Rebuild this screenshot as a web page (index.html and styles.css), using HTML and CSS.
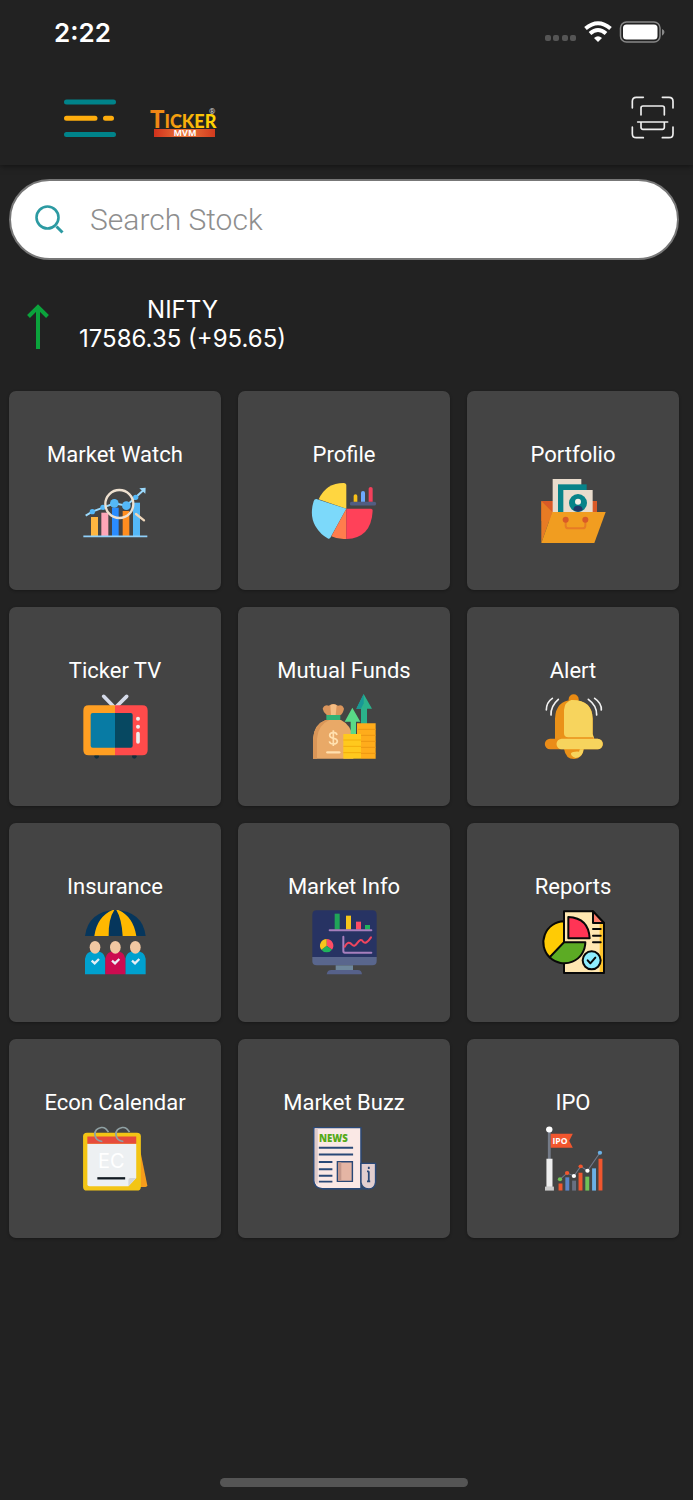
FILE: index.html
```
<!DOCTYPE html>
<html lang="en">
<head>
<meta charset="UTF-8">
<meta name="viewport" content="width=device-width, initial-scale=1.0">
<title>Ticker MVM</title>
<link rel="stylesheet" href="styles.css">
</head>
<body>
<header class="header">
    <div class="status-bar">
        <span class="time">2:22</span>
        <svg class="status-icons" viewBox="0 0 120 24" aria-hidden="true">
            <g fill="#555">
                <rect x="0" y="15" width="6" height="6" rx="2"/>
                <rect x="8" y="15" width="6" height="6" rx="2"/>
                <rect x="17" y="15" width="6" height="6" rx="2"/>
                <rect x="25" y="15" width="6" height="6" rx="2"/>
            </g>
            <g fill="none" stroke="#fff" stroke-width="4">
                <path d="M40.500 8.500Q53 -2 65.500 8.500"/>
                <path d="M45 13.500Q53 6.500 61 13.500"/>
            </g>
            <path d="M49 18Q53 14.500 57 18L53 22Z" fill="#fff"/>
            <rect x="75.500" y="2" width="39.500" height="20" rx="6" fill="none" stroke="#888" stroke-width="1.500"/>
            <rect x="78" y="4.500" width="34.500" height="15" rx="3.500" fill="#fff"/>
            <path d="M117 9Q119.500 10 119.500 12T117 15.700Z" fill="#888"/>
        </svg>
    </div>
    <div class="app-bar">
        <button class="icon-button" type="button" aria-label="Menu">
            <svg class="menu-icon" viewBox="0 0 52 38" fill="none" stroke-width="5" stroke-linecap="round">
                <path d="M2.500 3h47M2.500 35.500h47" stroke="#00838a"/>
                <path d="M2.500 19.200h28.500M41.500 19.200h6" stroke="#ffad0d"/>
            </svg>
        </button>
        <a class="logo" href="#">
            <svg viewBox="0 0 68 34">
                <defs>
                    <linearGradient id="gold" x1="0" x2="1">
                        <stop offset="0" stop-color="#ef7d17"/>
                        <stop offset="1" stop-color="#ffd800"/>
                    </linearGradient>
                    <linearGradient id="bar" x1="0" x2="1">
                        <stop offset="0" stop-color="#d0311c"/>
                        <stop offset=".5" stop-color="#ec7a3c"/>
                        <stop offset="1" stop-color="#d23a1e"/>
                    </linearGradient>
                </defs>
                <rect x="6" y="22" width="61" height="8" fill="url(#bar)"/>
                <text class="logo-name" x="2" y="21" fill="url(#gold)"><tspan class="logo-initial">T</tspan>ICKER</text>
                <text class="logo-sub" x="37" y="29" text-anchor="middle">MVM</text>
                <text class="logo-mark" x="61" y="7">®</text>
            </svg>
        </a>
        <button class="icon-button scan" type="button" aria-label="Scan code">
            <svg class="scan-icon" viewBox="333 290 132 132" fill="none" stroke="#eee" stroke-width="5" stroke-linecap="round">
                <path d="M337 326V306Q337 294 349 294H370M427 294H447Q459 294 459 306V326M459 383V403Q459 415 447 415H427M370 415H349Q337 415 337 403V383"/>
                <path d="M363 347V326Q363 320 369 320H427Q433 320 433 326V347M353 368H443M363 370V384Q363 390 369 390H427Q433 390 433 384V370"/>
            </svg>
        </button>
    </div>
</header>

<main class="main">
    <form class="search">
        <label for="stock" aria-label="Search stock">
            <svg class="search-icon" viewBox="0 0 30 30" fill="none" stroke="#2c9aa2">
                <circle cx="12.500" cy="12.500" r="11" stroke-width="2.600"/>
                <path d="M21.500 21.500l6 6" stroke-width="3"/>
            </svg>
        </label>
        <input type="search" id="stock" name="stock" placeholder="Search Stock">
    </form>

    <div class="index">
        <svg class="arrow" viewBox="0 0 22 46" fill="none" stroke="#0ba33c" stroke-width="4">
            <path d="M11 45V3M1.500 12.500L11 3L20.500 12.500"/>
        </svg>
        <div class="quote">
            <div>NIFTY</div>
            <div>17586.35 (+95.65)</div>
        </div>
    </div>

    <nav class="grid">
        <a class="card" href="#">
            <span>Market Watch</span>
            <svg viewBox="51 144 198 198">
                <path d="M78 261h21v57H78z" fill="#ffb640"/>
                <path d="M109 248h21v70h-21z" fill="#ffa6b8"/>
                <path d="M141 233h20v85h-20z" fill="#2a8cff"/>
                <path d="M173 243h20v75h-20z" fill="#ff8d1f"/>
                <path d="M204 218h21v100h-21z" fill="#54b8f8"/>
                <path d="M55 319h192" stroke="#8fd0fa" stroke-width="5"/>
                <path d="M62 257L82 245L114 233L148 220L184 227L212 202L236 180" fill="none" stroke="#9ad8fb" stroke-width="6"/>
                <path d="M223 175l19-2-1 18z" fill="#9ad8fb"/>
                <g fill="#54b8f8">
                    <circle cx="82" cy="245" r="8"/>
                    <circle cx="114" cy="232" r="8"/>
                    <circle cx="148" cy="220" r="13"/>
                    <circle cx="184" cy="227" r="13"/>
                    <circle cx="212" cy="202" r="8"/>
                </g>
                <circle cx="163" cy="222" r="42" fill="none" stroke="#eee0cf" stroke-width="7"/>
                <path d="M213 252L237 271" stroke="#eed6ba" stroke-width="7" stroke-linecap="round"/>
            </svg>
        </a>
        <a class="card" href="#">
            <span>Profile</span>
            <svg viewBox="51 144 198 198">
                <path d="M157 236L74 208Q96 159 149 159Q157 159 157 167Z" fill="#ffd640"/>
                <path d="M157 236L67 207Q61 207 59 214Q46 256 64 288Q80 315 103 326Q108 327 110 322Z" fill="#7cd9fa"/>
                <path d="M157 236L112 319Q132 329 157 327Z" fill="#ff7d4d"/>
                <path d="M157 236H230Q236 236 236 242Q232 324 157 327Z" fill="#ff4159"/>
                <path d="M173 221h68" stroke="#525d82" stroke-width="11" stroke-linecap="round"/>
                <path d="M179 215V198q0-5 5.500-5t5.500 5V215z" fill="#f8c018"/>
                <path d="M201 215V188q0-5 6-5t6 5V215z" fill="#6da9fc"/>
                <path d="M224 215V176q0-5 6-5t6 5V215z" fill="#f3405b"/>
            </svg>
        </a>
        <a class="card" href="#">
            <span>Portfolio</span>
            <svg viewBox="51 144 198 198">
                <path d="M55 213h167v60H55z" fill="#d95a27"/>
                <path d="M89 147h86v110H89z" fill="#e9dccd"/>
                <path d="M105 163h86v90h-86z" fill="#078389"/>
                <path d="M121 180h88v80h-88z" fill="#e9dccd"/>
                <circle cx="165" cy="219" r="27" fill="#078389"/>
                <circle cx="165" cy="215" r="9" fill="#f4eee5"/>
                <path d="M151 240q0-13 14-13t14 13q-14 11-28 0" fill="#213768"/>
                <path d="M55 213V339L88 246Z" fill="#e77b24"/>
                <path d="M88 246H248L214 339H55Z" fill="#f19d20"/>
                <path d="M128 272V287Q128 295 136 295H179Q187 295 187 287V272" fill="none" stroke="#e77b24" stroke-width="6"/>
                <circle cx="128" cy="269" r="9" fill="#d95a27"/>
                <circle cx="187" cy="269" r="9" fill="#d95a27"/>
            </svg>
        </a>
        <a class="card" href="#">
            <span>Ticker TV</span>
            <svg viewBox="51 42 198 198">
                <path d="M116 49L150 84L185 49" fill="none" stroke="#d5dae9" stroke-width="11" stroke-linecap="round"/>
                <circle cx="95" cy="229" r="7" fill="#122e3b"/>
                <circle cx="208" cy="229" r="7" fill="#122e3b"/>
                <path d="M150 76H71Q55 76 55 92V210Q55 226 71 226H150Z" fill="#ff9f22"/>
                <path d="M150 76H232Q248 76 248 92V210Q248 226 232 226H150Z" fill="#ff4b4b"/>
                <path d="M150 99H83Q77 99 77 105V197Q77 203 83 203H150Z" fill="#087ba4"/>
                <path d="M150 99H197Q203 99 203 105V197Q203 203 197 203H150Z" fill="#074861"/>
                <circle cx="219" cy="116" r="6" fill="#eee"/>
                <circle cx="219" cy="140" r="6" fill="#eee"/>
                <path d="M219 161v25" stroke="#eee" stroke-width="11" stroke-linecap="round"/>
            </svg>
        </a>
        <a class="card" href="#">
            <span>Mutual Funds</span>
            <svg viewBox="51 42 198 198">
                <path d="M57 236V176Q60 133 95 120H141Q172 135 178 176V236Z" fill="#e9a967"/>
                <path d="M57 236V176Q60 133 95 120H106Q72 135 69 176V236Z" fill="#d99658"/>
                <path d="M86 86Q92 73 104 77Q118 67 132 77Q145 72 150 86Q147 101 138 106H99Q88 98 86 86Z" fill="#db955c"/>
                <path d="M109 76Q118 69 128 76L125 105H111Z" fill="#f5bd84"/>
                <path d="M97 105h42v15H97z" fill="#31b276"/>
                <path d="M100 217h36" stroke="#ffe0af" stroke-width="7" stroke-linecap="round"/>
                <path d="M129 165Q127 157 118 157Q107 158 107 166Q107 173 118 175Q130 177 130 184Q129 192 118 192Q108 192 106 184M118 151V198" fill="none" stroke="#ffe0af" stroke-width="5"/>
                <path d="M175 83L199 125H186V165H170V125H152Z" fill="#59d987"/>
                <path d="M209 42L234 86H219V134H201V86H187Z" fill="#2bb28b"/>
                <path d="M209 42L187 86H201L209 70Z" fill="#189796"/>
                <path d="M148 162h53v74h-53z" fill="#ffc91d"/>
                <path d="M189 130h56v106h-44v-74h-12z" fill="#ffac1b"/>
                <path d="M148 180h53M148 199h53M148 218h53" stroke="#f2ad0d" stroke-width="3"/>
                <path d="M192 148h53M201 166h44M201 184h44M201 202h44M201 220h44" stroke="#ed9713" stroke-width="3"/>
            </svg>
        </a>
        <a class="card" href="#">
            <span>Alert</span>
            <svg viewBox="51 42 198 198">
                <circle cx="152" cy="58" r="15" fill="#e98a12"/>
                <path d="M96 184V116Q98 61 150 60Q208 62 209 116V162L216 184Z" fill="#ea9118"/>
                <path d="M123 160V90Q125 66 145 60Q207 58 209 116V162L216 184L210 172H136Q123 172 123 160Z" fill="#f7d45d"/>
                <path d="M123 206H182Q179 236 153 237Q128 237 123 206Z" fill="#ea9118"/>
                <path d="M182 206Q181 230 158 234Q142 228 144 220Q148 214 168 215L171 206Z" fill="#f7d45d"/>
                <path d="M81 192h143" stroke="#ea8c18" stroke-width="31" stroke-linecap="round"/>
                <path d="M116 192h108" stroke="#f7d45d" stroke-width="31" stroke-linecap="round"/>
                <path d="M88 55Q70 67 70 90M106 58Q83 78 84 105M196 58Q222 77 221 105M215 55Q236 69 235 90" fill="none" stroke="#f1f1f1" stroke-width="5" stroke-linecap="round"/>
            </svg>
        </a>
        <a class="card" href="#">
            <span>Insurance</span>
            <svg viewBox="51 30 198 198">
                <path d="M60 108Q70 34 151 30Q233 34 242 108Z" fill="#06365c"/>
                <path d="M88 108Q96 50 143 30H148Q130 56 131 108ZM154 30H160Q205 50 214 108H173Q170 56 154 30Z" fill="#ffb800"/>
                <path d="M60 223V176Q62 154 90 153Q118 154 121 176V223ZM181 223V176Q184 154 211 153Q240 154 242 176V223Z" fill="#00a1cf"/>
                <path d="M121 223V176Q124 154 151 153Q178 154 181 176V223Z" fill="#cc0b50"/>
                <g fill="#f2c8a2">
                    <ellipse cx="90" cy="142" rx="16" ry="19"/>
                    <ellipse cx="151" cy="142" rx="16" ry="19"/>
                    <ellipse cx="211" cy="142" rx="16" ry="19"/>
                </g>
                <path d="M80 182l9 8 13-13M141 182l9 8 13-13M201 182l9 8 13-13" fill="none" stroke="#e8eef5" stroke-width="7"/>
            </svg>
        </a>
        <a class="card" href="#">
            <span>Market Info</span>
            <svg viewBox="738 30 198 198">
                <path d="M742 171V44Q742 31 755 31H922Q935 31 935 44V171Z" fill="#273363"/>
                <path d="M742 171H935V183Q935 196 922 196H755Q742 196 742 183Z" fill="#59668d"/>
                <path d="M812 196h52v15h-52z" fill="#6e879c"/>
                <path d="M785 223Q787 210 799 210H878Q890 210 891 223Z" fill="#56618a"/>
                <path d="M809 41h15v48h-15z" fill="#20a558"/>
                <path d="M843 47h15v42h-15z" fill="#f6c51b"/>
                <path d="M873 65h15v24h-15z" fill="#ff4d65"/>
                <path d="M900 75h15v14h-15z" fill="#20b35c"/>
                <path d="M794 91h125M835 110V153Q835 158 840 158H919" fill="none" stroke="#a77fbd" stroke-width="6" stroke-linecap="round"/>
                <path d="M839 140Q850 120 861 134Q868 142 876 130Q888 113 894 125Q903 135 918 112" fill="none" stroke="#ef455e" stroke-width="6" stroke-linecap="round"/>
                <path d="M785 137V117A20 20 0 0 1 801 149Z" fill="#ff4d65"/>
                <path d="M785 137L801 149A20 20 0 0 1 769 149Z" fill="#20b35c"/>
                <path d="M785 137L769 149A20 20 0 0 1 785 117Z" fill="#f6c51b"/>
            </svg>
        </a>
        <a class="card" href="#">
            <span>Reports</span>
            <svg viewBox="51 30 198 198" stroke="#080808" stroke-width="6" stroke-linejoin="round" stroke-linecap="round">
                <path d="M123 34H210L243 69V219H123Z" fill="#ffe7b1"/>
                <path d="M230 72h10v144h-10z" fill="#ffc52e" stroke="none"/>
                <path d="M210 34V69H243Z" fill="#ff7d6b"/>
                <path d="M123 64A63 63 0 0 0 80 172L123 127Z" fill="#ffcb05"/>
                <path d="M123 127H187A63 63 0 0 1 80 172Z" fill="#5cab24"/>
                <path d="M136 51V115H200Q197 54 136 51Z" fill="#ff3455"/>
                <path d="M210 87h23M210 107h23M210 127h23" fill="none"/>
                <circle cx="206" cy="181" r="27" fill="#8eeeff"/>
                <path d="M194 181l8 9 15-17" fill="none"/>
            </svg>
        </a>
        <a class="card" href="#">
            <span>Econ Calendar</span>
            <svg viewBox="48 31 185 185">
                <g transform="scale(1 .93)">
                    <path d="M206 80L231 212Q231 217 226 217H190Z" fill="#f59c1c"/>
                    <rect x="51" y="54" width="162" height="174" rx="11" fill="#f3c515"/>
                    <path d="M63 87H200V190L178 215H69Q63 215 63 209Z" fill="#edf0f2"/>
                    <path d="M63 65h137v22H63z" fill="#e64b3c"/>
                    <path d="M178 215V196Q178 190 184 190H200Z" fill="#d2d5d8"/>
                    <path d="M122 52Q114 36 102 38Q84 41 84 59Q86 78 105 80M181 52Q173 36 161 38Q143 41 143 59Q145 78 164 80" fill="none" stroke="#8fa0a3" stroke-width="5"/>
                    <path d="M91 191h78" stroke="#111a22" stroke-width="7"/>
                </g>
                <text class="calendar-text" x="130" y="149" text-anchor="middle">EC</text>
            </svg>
        </a>
        <a class="card" href="#">
            <span>Market Buzz</span>
            <svg viewBox="689 31 185 185">
                <g transform="scale(1 .93)" stroke="#294877" stroke-width="4">
                    <path d="M697 38H829V222H720Q697 218 697 198Z" fill="#fae8e5"/>
                    <path d="M700 40h8V210Q700 206 700 198Z" fill="#dfcac9" stroke="none"/>
                    <path d="M829 146H870V203Q868 223 850 223Q832 221 829 203Z" fill="#e1cecf"/>
                    <path d="M720 223h130" fill="none"/>
                    <path d="M711 99h96M711 119h96M711 142h38M711 164h38M711 183h38M711 201h38" stroke-width="6"/>
                    <path d="M763 141h42v59h-42z" fill="#e4b5a4"/>
                    <path d="M765 143h9v55h-9z" fill="#c5988b" stroke="none"/>
                    <path d="M851 156v7M851 170v30M846 170h5M846 200h9" fill="none" stroke-width="5"/>
                </g>
                <text class="news-text" x="752" y="75" text-anchor="middle">NEWS</text>
            </svg>
        </a>
        <a class="card" href="#">
            <span>IPO</span>
            <svg viewBox="1330 31 185 185">
                <g transform="scale(1 .93)">
                    <path d="M1356 48v86" stroke="#747b88" stroke-width="8"/>
                    <circle cx="1356" cy="44" r="9" fill="#fff"/>
                    <path d="M1348 132h17v85h-17z" fill="#eee"/>
                    <path d="M1344 216h25v12h-25z" fill="#ccc"/>
                    <path d="M1360 57H1422L1412 78L1422 99H1360Z" fill="#f1562e"/>
                    <path d="M1382 207h11v21h-11zM1438 174h11v54h-11zM1494 132h11v96h-11z" fill="#f1562e"/>
                    <path d="M1401 188h11v40h-11z" fill="#5b84c7"/>
                    <path d="M1420 198h11v30h-11z" fill="#697080"/>
                    <path d="M1457 186h11v42h-11z" fill="#70c157"/>
                    <path d="M1476 161h11v67h-11z" fill="#6ab0e5"/>
                    <path d="M1386 194L1406 175L1425 184L1444 155L1463 168L1498 114" fill="none" stroke="#727a8d" stroke-width="3"/>
                    <circle cx="1386" cy="194" r="6" fill="#70c157"/>
                    <circle cx="1406" cy="175" r="6" fill="#f1562e"/>
                    <circle cx="1425" cy="184" r="6" fill="#fff"/>
                    <circle cx="1444" cy="155" r="6" fill="#f1562e"/>
                    <circle cx="1463" cy="168" r="6" fill="#fff"/>
                    <circle cx="1498" cy="114" r="6" fill="#6ab0e5"/>
                </g>
                <text class="flag-text" x="1386" y="81" text-anchor="middle">IPO</text>
            </svg>
        </a>
    </nav>
</main>

<footer class="footer">
    <div class="home-indicator"></div>
</footer>
</body>
</html>
```

FILE: styles.css
```
* {
    box-sizing: border-box;
}
body {
    display: flex;
    flex-direction: column;
    min-height: 100vh;
    margin: 0;
    background-color: #222;
    color: #fff;
    font-family: Roboto, sans-serif;
}
svg {
    display: block;
}
a {
    color: inherit;
    text-decoration: none;
}
.header {
    box-shadow: 0 1px 6px rgba(0, 0, 0, 0.5);
}
.status-bar {
    display: flex;
    justify-content: space-between;
    align-items: center;
    height: 64px;
    padding: 0 28px 0 54px;
}
.time {
    font-family: Inter, sans-serif;
    font-size: 26px;
    font-weight: 600;
}
.status-icons {
    width: 120px;
    height: 24px;
}
.app-bar {
    display: flex;
    align-items: center;
    height: 101px;
    padding: 7px 18px 0 64px;
}
.icon-button {
    padding: 0;
    border: none;
    background: none;
    cursor: pointer;
}
.menu-icon {
    width: 52px;
    height: 38px;
}
.logo {
    margin: 12px 0 0 32px;
}
.logo svg {
    width: 68px;
    height: 34px;
    overflow: visible;
}
.logo-name {
    font-family: Lato, sans-serif;
    font-size: 18px;
    font-weight: 900;
}
.logo-initial {
    font-size: 24px;
}
.logo-sub {
    fill: #fff;
    font-family: "Open Sans", sans-serif;
    font-size: 9px;
    font-weight: 700;
}
.logo-mark {
    fill: #ddd;
    font-size: 8px;
}
.scan {
    margin-left: auto;
}
.scan-icon {
    width: 44px;
    height: 44px;
}
.main {
    padding: 14px 14px 0 9px;
}
.search {
    display: flex;
    align-items: center;
    gap: 25px;
    height: 81px;
    padding: 0 24px;
    border: 2px solid #777;
    border-radius: 41px;
    background-color: #fff;
}
.search-icon {
    width: 30px;
    height: 30px;
}
.search input {
    flex: 1;
    min-width: 0;
    padding: 0;
    border: none;
    outline: none;
    background: none;
    color: #222;
    font-family: Roboto, sans-serif;
    font-size: 30px;
    font-weight: 300;
}
.search input::placeholder {
    color: #8e8e8e;
}
.index {
    display: flex;
    align-items: center;
    gap: 30px;
    padding: 35px 0 38px 18px;
}
.arrow {
    width: 22px;
    height: 46px;
    margin-top: 6px;
}
.quote {
    font-family: Inter, sans-serif;
    font-size: 24px;
    line-height: 29px;
    text-align: center;
}
.grid {
    display: grid;
    grid-template-columns: repeat(3, 1fr);
    gap: 17px;
}
.card {
    display: flex;
    flex-direction: column;
    align-items: center;
    gap: 10px;
    padding: 51px 0 46px;
    border-radius: 7px;
    background-color: #444;
    box-shadow: 0 1px 3px rgba(0, 0, 0, 0.3);
    font-size: 22px;
    line-height: 26px;
}
.card svg {
    width: 66px;
    height: 66px;
    overflow: visible;
}
.calendar-text {
    fill: #fff;
    font-family: Inter, sans-serif;
    font-size: 56px;
}
.news-text {
    fill: #55aa18;
    font-family: "Open Sans", sans-serif;
    font-size: 27px;
    font-weight: 800;
}
.flag-text {
    fill: #fff;
    font-family: "Open Sans", sans-serif;
    font-size: 24px;
    font-weight: 700;
}
.footer {
    margin-top: auto;
    padding: 20px 14px 13px 9px;
}
.home-indicator {
    width: 37%;
    height: 9px;
    margin: 0 auto;
    border-radius: 5px;
    background-color: #555;
}
```
